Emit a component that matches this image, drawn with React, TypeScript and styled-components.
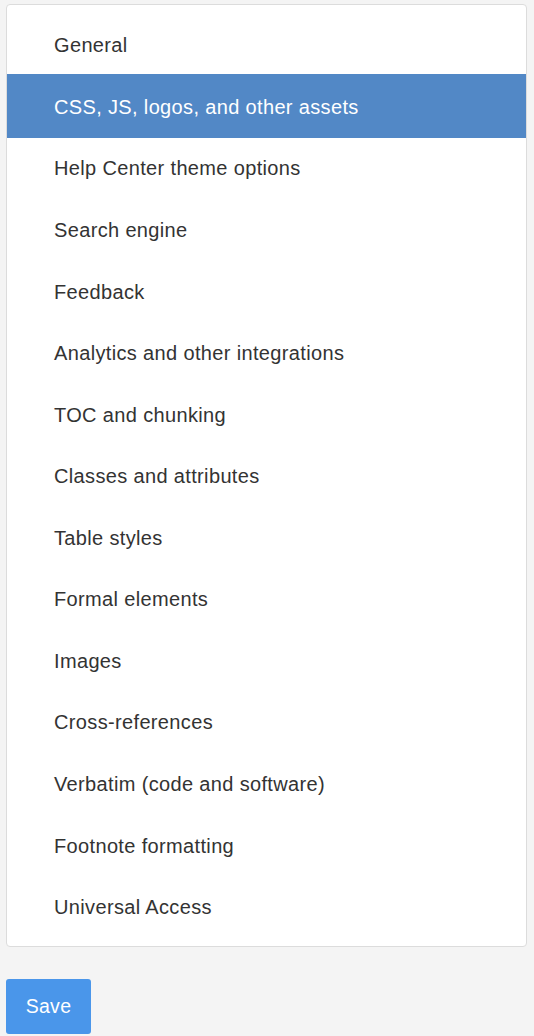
import React from 'react';
import styled, { createGlobalStyle } from 'styled-components';

const GlobalStyle = createGlobalStyle`
	html, body {
		margin: 0;
		padding: 0;
		background: #f4f4f4;
	}
	body {
		font-family: 'Liberation Sans', Arial, sans-serif;
		color: #333;
	}
`;

const Page = styled.div`
	display: flex;
	flex-direction: column;
	align-items: flex-start;
	gap: 32px;
	padding: 4px 7px 0 6px;
`;

const Panel = styled.div`
	align-self: stretch;
	display: flex;
	flex-direction: column;
	padding: 10px 0 8px;
	background: #fff;
	border: 1px solid #dcdcdc;
	border-radius: 4px;
`;

const Item = styled.div<{ $active?: boolean }>`
	display: flex;
	align-items: center;
	height: 61.57px;
	padding-left: 47px;
	font-size: 20px;
	letter-spacing: 0.35px;
	color: ${(p) => (p.$active ? '#fff' : '#333')};
	background: ${(p) => (p.$active ? '#5288c6' : 'transparent')};
	${(p) => p.$active && 'margin-top: -2.5px; height: 64.07px; padding-top: 2.5px; box-sizing: border-box;'}
`;

const SaveButton = styled.button`
	width: 85px;
	height: 55px;
	border: none;
	border-radius: 3px;
	background: #4a96ea;
	color: #fff;
	font-family: 'Liberation Sans', Arial, sans-serif;
	font-size: 19.5px;
	letter-spacing: 0.3px;
	padding: 0;
	cursor: pointer;
`;

const sections = [
	'General',
	'CSS, JS, logos, and other assets',
	'Help Center theme options',
	'Search engine',
	'Feedback',
	'Analytics and other integrations',
	'TOC and chunking',
	'Classes and attributes',
	'Table styles',
	'Formal elements',
	'Images',
	'Cross-references',
	'Verbatim (code and software)',
	'Footnote formatting',
	'Universal Access',
];

const App: React.FC = () => (
	<>
		<GlobalStyle />
		<Page>
			<Panel>
				{sections.map((s, i) => (
					<Item key={s} $active={i === 1}>
						{s}
					</Item>
				))}
			</Panel>
			<SaveButton>Save</SaveButton>
		</Page>
	</>
);

export default App;
